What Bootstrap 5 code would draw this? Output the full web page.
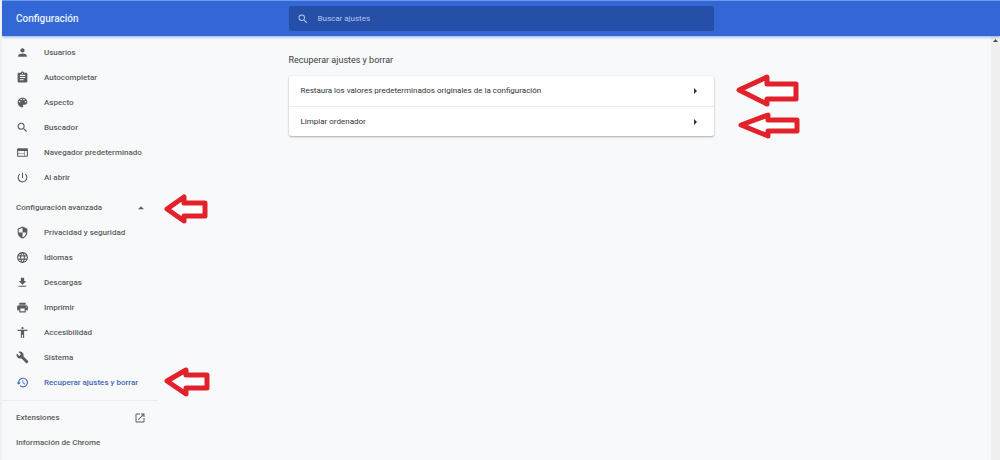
<!DOCTYPE html>
<html lang="es">
<head>
<meta charset="utf-8">
<meta name="viewport" content="width=device-width, initial-scale=1">
<title>Configuración</title>
<link href="https://cdn.jsdelivr.net/npm/bootstrap@5.3.0/dist/css/bootstrap.min.css" rel="stylesheet">
<style>
  body { font-family: Roboto, "Liberation Sans", sans-serif; font-size: 8px; line-height: 12px; background: #f8f9fb; color: #333; border-left: 2px solid #eef0f3; }
  .settings-grid { display: grid; grid-template-columns: 1fr minmax(0, 425px) 1fr; }
  .topbar { height: 36px; background: #3367d6; border-top: 1px solid #6f9bea; box-shadow: 0 1px 3px rgba(51, 103, 214, .55); position: relative; z-index: 1; }
  .topbar h1 { font-size: 10px; line-height: 12px; font-weight: 500; color: #e8effc; padding-left: 14px; }
  .search-box { height: 25px; background: #264fa8; border-radius: 2px; color: #b4c6ee; padding: 0 8px; gap: 9px; }
  .search-box input { font-size: 8px; line-height: 12px; color: #c5d3f2; background: transparent; border: 0; outline: 0; padding: 0; }
  .search-box input::placeholder { color: #b4c6ee; opacity: 1; }
  .side-menu { width: 156px; padding-top: 4px; }
  .side-menu .nav-link { height: 25px; padding: 0 0 0 14px; color: #5a5c60; font-weight: 500; display: flex; align-items: center; position: relative; }
  .side-menu .nav-link.active { color: #3c68b2; }
  .menu-icon { width: 13px; height: 13px; margin-right: 15px; }
  .icon { fill: currentColor; flex: none; }
  .side-menu button { width: 100%; border: 0; background: none; margin-top: 5px; }
  .side-menu hr { margin: 5px 0 4px; border-color: #c9ccd1; }
  .section-title { font-size: 9px; line-height: 12px; font-weight: 400; color: #3c3d40; margin: 18px 0 10px; }
  .options { background: #fff; border-radius: 2px; box-shadow: 0 1px 2px rgba(60, 64, 67, .4), 0 0 1px rgba(60, 64, 67, .2); }
  .option { height: 30px; width: 100%; border: 0; background: none; padding: 0 16px 0 12px; color: #333; position: relative; }
  .option + .option { border-top: 1px solid #eceef0; }
  .pointer { position: absolute; fill: #fff; stroke: #e1222b; stroke-width: 5; stroke-linejoin: round; pointer-events: none; overflow: visible; }
  .side-menu .pointer { left: 161px; }
  .option .pointer { left: calc(100% + 22px); }
  .scroll-track { width: 9px; margin-left: -9px; background: #f0f0f0; color: #505050; padding-top: 3px; }
</style>
</head>
<body class="min-vh-100 d-flex flex-column">
<svg class="d-none" aria-hidden="true">
  <symbol id="i-search" viewBox="0 0 24 24"><path d="M15.5 14h-.79l-.28-.27A6.47 6.47 0 0 0 16 9.500 6.500 6.500 0 1 0 9.500 16c1.610 0 3.090-.59 4.230-1.570l.27.28v.79l5 4.990L20.490 19l-4.990-5zm-6 0C7.010 14 5 11.990 5 9.500S7.010 5 9.500 5 14 7.010 14 9.500 11.990 14 9.500 14z"/></symbol>
</svg>

<header class="topbar settings-grid align-items-center">
  <h1 class="mb-0">Configuración</h1>
  <label class="search-box d-flex align-items-center">
    <svg class="icon" width="12" height="12" aria-hidden="true"><use href="#i-search"/></svg>
    <input class="flex-grow-1" type="search" placeholder="Buscar ajustes" aria-label="Buscar ajustes">
  </label>
</header>

<div class="d-flex flex-grow-1">
  <div class="settings-grid flex-grow-1">
    <nav class="side-menu nav flex-column flex-nowrap" aria-label="Secciones">
      <a class="nav-link" href="#usuarios"><svg class="icon menu-icon" viewBox="0 0 24 24"><path d="M12 12c2.210 0 4-1.790 4-4s-1.790-4-4-4-4 1.790-4 4 1.790 4 4 4zm0 2c-2.670 0-8 1.340-8 4v2h16v-2c0-2.660-5.330-4-8-4z"/></svg>Usuarios</a>
      <a class="nav-link" href="#autocompletar"><svg class="icon menu-icon" viewBox="0 0 24 24"><path d="M19 3h-4.180C14.400 1.840 13.300 1 12 1s-2.400.84-2.820 2H5c-1.100 0-2 .9-2 2v14c0 1.100.9 2 2 2h14c1.100 0 2-.9 2-2V5c0-1.100-.9-2-2-2zm-7 0c.55 0 1 .45 1 1s-.45 1-1 1-1-.45-1-1 .45-1 1-1zm2 14H7v-2h7v2zm3-4H7v-2h10v2zm0-4H7V7h10v2z"/></svg>Autocompletar</a>
      <a class="nav-link" href="#aspecto"><svg class="icon menu-icon" viewBox="0 0 24 24"><path d="M12 3a9 9 0 0 0 0 18c.83 0 1.500-.67 1.500-1.500 0-.39-.15-.74-.39-1.010-.23-.26-.38-.61-.38-.99 0-.83.67-1.500 1.500-1.500H16c2.760 0 5-2.240 5-5 0-4.420-4.030-8-9-8zm-5.500 9a1.500 1.500 0 1 1 0-3 1.500 1.500 0 0 1 0 3zm3-4a1.500 1.500 0 1 1 0-3 1.500 1.500 0 0 1 0 3zm5 0a1.500 1.500 0 1 1 0-3 1.500 1.500 0 0 1 0 3zm3 4a1.500 1.500 0 1 1 0-3 1.500 1.500 0 0 1 0 3z"/></svg>Aspecto</a>
      <a class="nav-link" href="#buscador"><svg class="icon menu-icon"><use href="#i-search"/></svg>Buscador</a>
      <a class="nav-link" href="#navegador"><svg class="icon menu-icon" viewBox="0 0 24 24"><path d="M20 4H4c-1.100 0-1.990.9-1.990 2L2 18c0 1.100.9 2 2 2h16c1.100 0 2-.9 2-2V6c0-1.100-.9-2-2-2zm-5 14H4v-4h11v4zm0-5H4V9h11v4zm5 5h-4V9h4v9z"/></svg>Navegador predeterminado</a>
      <a class="nav-link" href="#al-abrir"><svg class="icon menu-icon" viewBox="0 0 24 24"><path d="M13 3h-2v10h2V3zm4.830 2.170l-1.420 1.420A6.920 6.920 0 0 1 19 12a7 7 0 1 1-11.420-5.420L6.170 5.170A9 9 0 1 0 21 12c0-2.740-1.230-5.180-3.170-6.830z"/></svg>Al abrir</a>

      <button class="nav-link justify-content-between pe-2" type="button" aria-expanded="true">Configuración avanzada
        <svg class="icon me-1" width="10" height="10" viewBox="0 0 24 24"><path d="M5 15l7-7 7 7z"/></svg>
        <svg class="pointer" width="44" height="33" viewBox="0 0 44 33"><path d="M4 18L21 6V12H42V25H21V30Z"/></svg>
      </button>

      <a class="nav-link" href="#privacidad"><svg class="icon menu-icon" viewBox="0 0 24 24"><path d="M12 1L3 5v6c0 5.550 3.840 10.740 9 12 5.160-1.260 9-6.450 9-12V5l-9-4zm0 10.990h7c-.53 4.120-3.280 7.790-7 8.940V12H5V6.300l7-3.110v8.800z"/></svg>Privacidad y seguridad</a>
      <a class="nav-link" href="#idiomas"><svg class="icon menu-icon" viewBox="0 0 24 24"><path d="M11.990 2C6.470 2 2 6.480 2 12s4.470 10 9.990 10C17.520 22 22 17.520 22 12S17.520 2 11.990 2zm6.930 6h-2.950a15.650 15.650 0 0 0-1.380-3.560A8.030 8.030 0 0 1 18.920 8zM12 4.040c.83 1.200 1.480 2.530 1.910 3.960h-3.820c.43-1.430 1.080-2.760 1.910-3.960zM4.260 14C4.100 13.360 4 12.690 4 12s.1-1.360.26-2h3.380a16.500 16.500 0 0 0 0 4H4.260zm.82 2h2.950c.32 1.250.78 2.450 1.380 3.560A7.990 7.990 0 0 1 5.080 16zm2.950-8H5.080a7.990 7.990 0 0 1 4.330-3.560A15.650 15.650 0 0 0 8.030 8zM12 19.960A14.090 14.090 0 0 1 10.090 16h3.820A14.090 14.090 0 0 1 12 19.960zM14.340 14H9.660a14.700 14.700 0 0 1 0-4h4.680a14.700 14.700 0 0 1 0 4zm.25 5.560c.6-1.110 1.060-2.310 1.380-3.560h2.950a8.030 8.030 0 0 1-4.330 3.560zM16.360 14a16.500 16.500 0 0 0 0-4h3.380a8.240 8.240 0 0 1 0 4h-3.380z"/></svg>Idiomas</a>
      <a class="nav-link" href="#descargas"><svg class="icon menu-icon" viewBox="0 0 24 24"><path d="M19 9h-4V3H9v6H5l7 7 7-7zM5 18v2h14v-2H5z"/></svg>Descargas</a>
      <a class="nav-link" href="#imprimir"><svg class="icon menu-icon" viewBox="0 0 24 24"><path d="M19 8H5c-1.660 0-3 1.340-3 3v6h4v4h12v-4h4v-6c0-1.660-1.340-3-3-3zm-3 11H8v-5h8v5zm3-7a1 1 0 1 1 0-2 1 1 0 0 1 0 2zm-1-9H6v4h12V3z"/></svg>Imprimir</a>
      <a class="nav-link" href="#accesibilidad"><svg class="icon menu-icon" viewBox="0 0 24 24"><path d="M12 2a2 2 0 1 1 0 4 2 2 0 0 1 0-4zm9 7h-6v13h-2v-6h-2v6H9V9H3V7h18v2z"/></svg>Accesibilidad</a>
      <a class="nav-link" href="#sistema"><svg class="icon menu-icon" viewBox="0 0 24 24"><path d="M22.700 19l-9.100-9.100c.9-2.300.4-5-1.500-6.900-2-2-5-2.400-7.400-1.300L9 6 6 9 1.600 4.700C.4 7.100.9 10.100 2.900 12.100c1.900 1.900 4.600 2.400 6.900 1.500l9.100 9.100c.4.4 1 .4 1.400 0l2.300-2.300c.5-.4.5-1.100.1-1.400z"/></svg>Sistema</a>
      <a class="nav-link active" href="#recuperar" aria-current="page"><svg class="icon menu-icon" viewBox="0 0 24 24"><path d="M13 3a9 9 0 0 0-9 9H1l3.890 3.890.07.14L9 12H6a7 7 0 1 1 2.060 4.940l-1.420 1.420A9 9 0 1 0 13 3zm-1 5v5l4.280 2.540.72-1.210-3.500-2.080V8H12z"/></svg>Recuperar ajustes y borrar
        <svg class="pointer" width="46" height="32" viewBox="0 0 46 32"><path d="M4 14L23 3V8H44V21H23V27Z"/></svg>
      </a>

      <hr>
      <a class="nav-link justify-content-between pe-2" href="#extensiones">Extensiones
        <svg class="icon me-1" width="12" height="12" viewBox="0 0 24 24"><path d="M19 19H5V5h7V3H5a2 2 0 0 0-2 2v14a2 2 0 0 0 2 2h14c1.100 0 2-.9 2-2v-7h-2v7zM14 3v2h3.590l-9.830 9.830 1.410 1.410L19 6.410V10h2V3h-7z"/></svg>
      </a>
      <a class="nav-link" href="#informacion">Información de Chrome</a>
    </nav>

    <main>
      <h2 class="section-title">Recuperar ajustes y borrar</h2>
      <div class="options">
        <button class="option d-flex align-items-center justify-content-between" type="button">Restaura los valores predeterminados originales de la configuración
          <svg class="icon" width="6" height="6" viewBox="0 0 6 6"><path d="M2 0l3 3-3 3z"/></svg>
          <svg class="pointer" width="62" height="33" viewBox="0 0 62 33"><path d="M3 15L31 2V9H60V24H31V29Z"/></svg>
        </button>
        <button class="option d-flex align-items-center justify-content-between" type="button">Limpiar ordenador
          <svg class="icon" width="6" height="6" viewBox="0 0 6 6"><path d="M2 0l3 3-3 3z"/></svg>
          <svg class="pointer" width="62" height="35" viewBox="0 0 62 35"><path d="M5 21L32 11V16H61V27H32V32Z"/></svg>
        </button>
      </div>
    </main>
  </div>
  <div class="scroll-track" aria-hidden="true">
    <svg class="icon d-block mx-auto" width="5" height="4" viewBox="0 0 5 4"><path d="M0 3l2.500-3L5 3z"/></svg>
  </div>
</div>
<script src="https://cdn.jsdelivr.net/npm/bootstrap@5.3.0/dist/js/bootstrap.bundle.min.js"></script>
</body>
</html>
